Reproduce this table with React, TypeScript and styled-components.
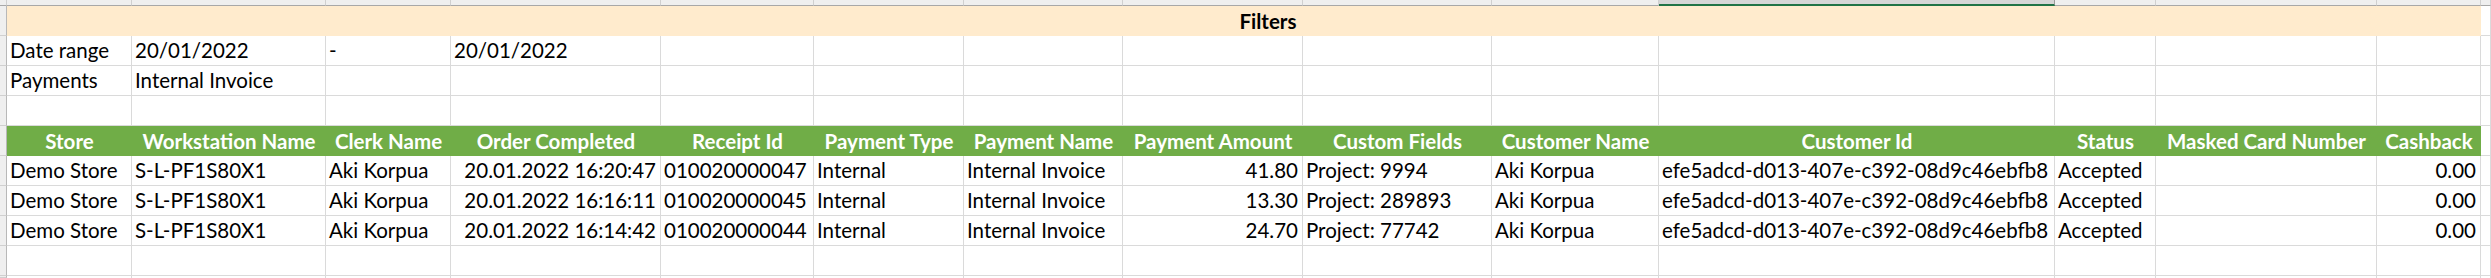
import React from 'react';
import styled, { createGlobalStyle, css } from 'styled-components';

const COLS = [7, 125, 194, 125, 210, 153, 150, 159, 180, 189, 167, 396, 101, 221, 104, 10];
const SELECTED_COL = 11;

const Global = createGlobalStyle`
  html, body { margin: 0; padding: 0; background: #ffffff; }
  body { font-family: Lato, "Open Sans", sans-serif; }
`;

const Sheet = styled.div`
  display: grid;
  grid-template-columns: ${COLS.map((c) => `${c}px`).join(' ')};
  grid-template-rows: 6px repeat(9, 30px) 2px;
  width: 2491px;
  height: 278px;
  overflow: hidden;
  font-family: Lato, "Open Sans", sans-serif;
  font-size: 20.5px;
  color: #000;
  background: #fff;
`;

const ColHead = styled.div<{ $selected?: boolean }>`
  box-sizing: border-box;
  background: ${(p) => (p.$selected ? '#d6d6d6' : '#efefef')};
  border-right: 1px solid ${(p) => (p.$selected ? '#9c9c9c' : '#d0d0d0')};
  ${(p) =>
    p.$selected
      ? css`border-bottom: 2px solid #217346;`
      : css`border-bottom: 1px solid #a8a8a8;`}
`;

const Gutter = styled.div`
  box-sizing: border-box;
  background: #efefef;
  border-right: 1px solid #b8b8b8;
  border-bottom: 1px solid #d0d0d0;
`;

const Cell = styled.div<{ $align?: 'left' | 'right' | 'center' }>`
  box-sizing: border-box;
  border-right: 1px solid #dadada;
  border-bottom: 1px solid #dadada;
  padding: 0 4px 0 3px;
  line-height: 29px;
  white-space: nowrap;
  overflow: hidden;
  text-align: ${(p) => p.$align ?? 'left'};
`;

const Banner = styled.div<{ $span: number }>`
  grid-column: span ${(p) => p.$span};
  background: #ffebcd;
  font-weight: 700;
  text-align: center;
  line-height: 30px;
  padding-left: 48px;
  white-space: nowrap;
`;

const HeadCell = styled.div`
  background: #70ad47;
  color: #ffffff;
  font-weight: 700;
  text-align: center;
  line-height: 30px;
  white-space: nowrap;
  overflow: hidden;
`;

const Stub = styled.div`
  box-sizing: border-box;
  border-right: 1px solid #dadada;
`;

type Align = 'left' | 'right' | 'center';

const headers = [
  'Store',
  'Workstation Name',
  'Clerk Name',
  'Order Completed',
  'Receipt Id',
  'Payment Type',
  'Payment Name',
  'Payment Amount',
  'Custom Fields',
  'Customer Name',
  'Customer Id',
  'Status',
  'Masked Card Number',
  'Cashback',
];

const aligns: Align[] = [
  'left', 'left', 'left', 'right', 'left', 'left', 'left', 'right',
  'left', 'left', 'left', 'left', 'left', 'right',
];

const rows = [
  ['Demo Store', 'S-L-PF1S80X1', 'Aki Korpua', '20.01.2022 16:20:47', '010020000047', 'Internal', 'Internal Invoice', '41.80', 'Project: 9994', 'Aki Korpua', 'efe5adcd-d013-407e-c392-08d9c46ebfb8', 'Accepted', '', '0.00'],
  ['Demo Store', 'S-L-PF1S80X1', 'Aki Korpua', '20.01.2022 16:16:11', '010020000045', 'Internal', 'Internal Invoice', '13.30', 'Project: 289893', 'Aki Korpua', 'efe5adcd-d013-407e-c392-08d9c46ebfb8', 'Accepted', '', '0.00'],
  ['Demo Store', 'S-L-PF1S80X1', 'Aki Korpua', '20.01.2022 16:14:42', '010020000044', 'Internal', 'Internal Invoice', '24.70', 'Project: 77742', 'Aki Korpua', 'efe5adcd-d013-407e-c392-08d9c46ebfb8', 'Accepted', '', '0.00'],
];

const DATA_COLS = headers.length; // 14
const TOTAL_COLS = COLS.length; // 16 incl. gutter

const filterRows = [
  ['Date range', '20/01/2022', '-', '20/01/2022'],
  ['Payments', 'Internal Invoice'],
];

function PlainRow({ values, rowKey }: { values: string[]; rowKey: string }) {
  return (
    <>
      <Gutter />
      {Array.from({ length: TOTAL_COLS - 1 }).map((_, i) => (
        <Cell key={`${rowKey}-${i}`}>{values[i] ?? ''}</Cell>
      ))}
    </>
  );
}

export default function App() {
  return (
    <>
      <Global />
      <Sheet>
        {COLS.map((_, i) => (
          <ColHead key={`ch-${i}`} $selected={i === SELECTED_COL} />
        ))}

        <Gutter />
        <Banner $span={DATA_COLS}>Filters</Banner>
        <Cell />

        {filterRows.map((r, i) => (
          <PlainRow key={`f-${i}`} rowKey={`f-${i}`} values={r} />
        ))}

        <PlainRow rowKey="e1" values={[]} />

        <Gutter />
        {headers.map((h) => (
          <HeadCell key={h}>{h}</HeadCell>
        ))}
        <Cell />

        {rows.map((r, ri) => (
          <React.Fragment key={`r-${ri}`}>
            <Gutter />
            {r.map((v, ci) => (
              <Cell key={`r-${ri}-${ci}`} $align={aligns[ci]}>
                {v}
              </Cell>
            ))}
            <Cell />
          </React.Fragment>
        ))}

        <PlainRow rowKey="e2" values={[]} />

        <Gutter />
        {Array.from({ length: TOTAL_COLS - 1 }).map((_, i) => (
          <Stub key={`s-${i}`} />
        ))}
      </Sheet>
    </>
  );
}
